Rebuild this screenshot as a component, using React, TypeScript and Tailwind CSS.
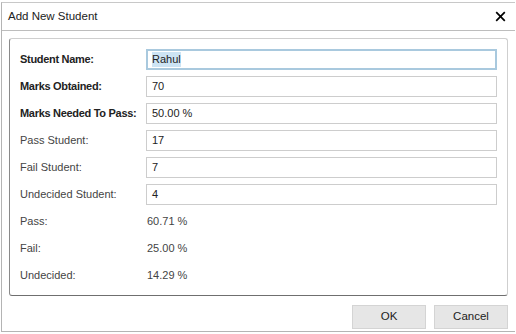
import React from 'react';

const inputs = [
  { label: 'Student Name:', value: 'Rahul', bold: true, focus: true },
  { label: 'Marks Obtained:', value: '70', bold: true },
  { label: 'Marks Needed To Pass:', value: '50.00 %', bold: true },
  { label: 'Pass Student:', value: '17' },
  { label: 'Fail Student:', value: '7' },
  { label: 'Undecided Student:', value: '4' },
];

const results = [
  { label: 'Pass:', value: '60.71 %' },
  { label: 'Fail:', value: '25.00 %' },
  { label: 'Undecided:', value: '14.29 %' },
];

export default function App() {
  return (
    <div className="w-[516px] h-[334px] bg-white p-[1px] pt-[2px] font-['Liberation_Sans',Arial,sans-serif] text-[11px] text-[#333]">
      <div className="flex flex-col h-[330px] border-l border-t border-b border-[#b4b4b4] border-t-[#c8c8c8]">
        {/* Title bar */}
        <div className="flex items-center justify-between h-[28px] pl-[6px] pr-[9px] border-b border-[#bdbdbd]">
          <span className="text-[11.5px] text-[#222]">Add New Student</span>
          <svg width="11" height="11" viewBox="0 0 11 11" className="text-black">
            <path d="M1.2 1.2 L9.8 9.8 M9.8 1.2 L1.2 9.8" stroke="currentColor" strokeWidth="1.7" />
          </svg>
        </div>

        {/* Form */}
        <div className="px-[7px] pt-[7px]">
          <div className="rounded-[3px] border border-[#cfcfcf] border-l-[#8a8a8a] border-b-[#6f6f6f] pl-[10px] pr-[10px] pt-[7px] pb-[6px]">
            {inputs.map((row) => (
              <div key={row.label} className="flex items-center h-[27px]">
                <span
                  className={`w-[126px] whitespace-nowrap ${
                    row.bold ? 'font-bold text-[#222] tracking-[-0.3px]' : 'text-[#444]'
                  }`}
                >
                  {row.label}
                </span>
                <div
                  className={`flex-1 h-[21px] flex items-center border ${
                    row.focus ? 'border-[#a9c9de] border-2 px-[4px]' : 'border-[#cdcdcd] px-[5px]'
                  }`}
                >
                  <span className={row.focus ? 'bg-[#cde4f4] text-[#222] leading-[15px]' : 'text-[#222]'}>
                    {row.value}
                  </span>
                </div>
              </div>
            ))}
            {results.map((row) => (
              <div key={row.label} className="flex items-center h-[27px] text-[#444]">
                <span className="w-[127px]">{row.label}</span>
                <span>{row.value}</span>
              </div>
            ))}
          </div>
        </div>

        {/* Buttons */}
        <div className="flex justify-end gap-[8px] mt-auto pr-[7px] pb-[2px]">
          <button className="w-[74px] h-[24px] bg-[#e6e6e6] border border-[#d4d4d4] text-[#222] text-[11.5px]">OK</button>
          <button className="w-[74px] h-[24px] bg-[#e6e6e6] border border-[#d4d4d4] text-[#222] text-[11.5px]">Cancel</button>
        </div>
      </div>
    </div>
  );
}
